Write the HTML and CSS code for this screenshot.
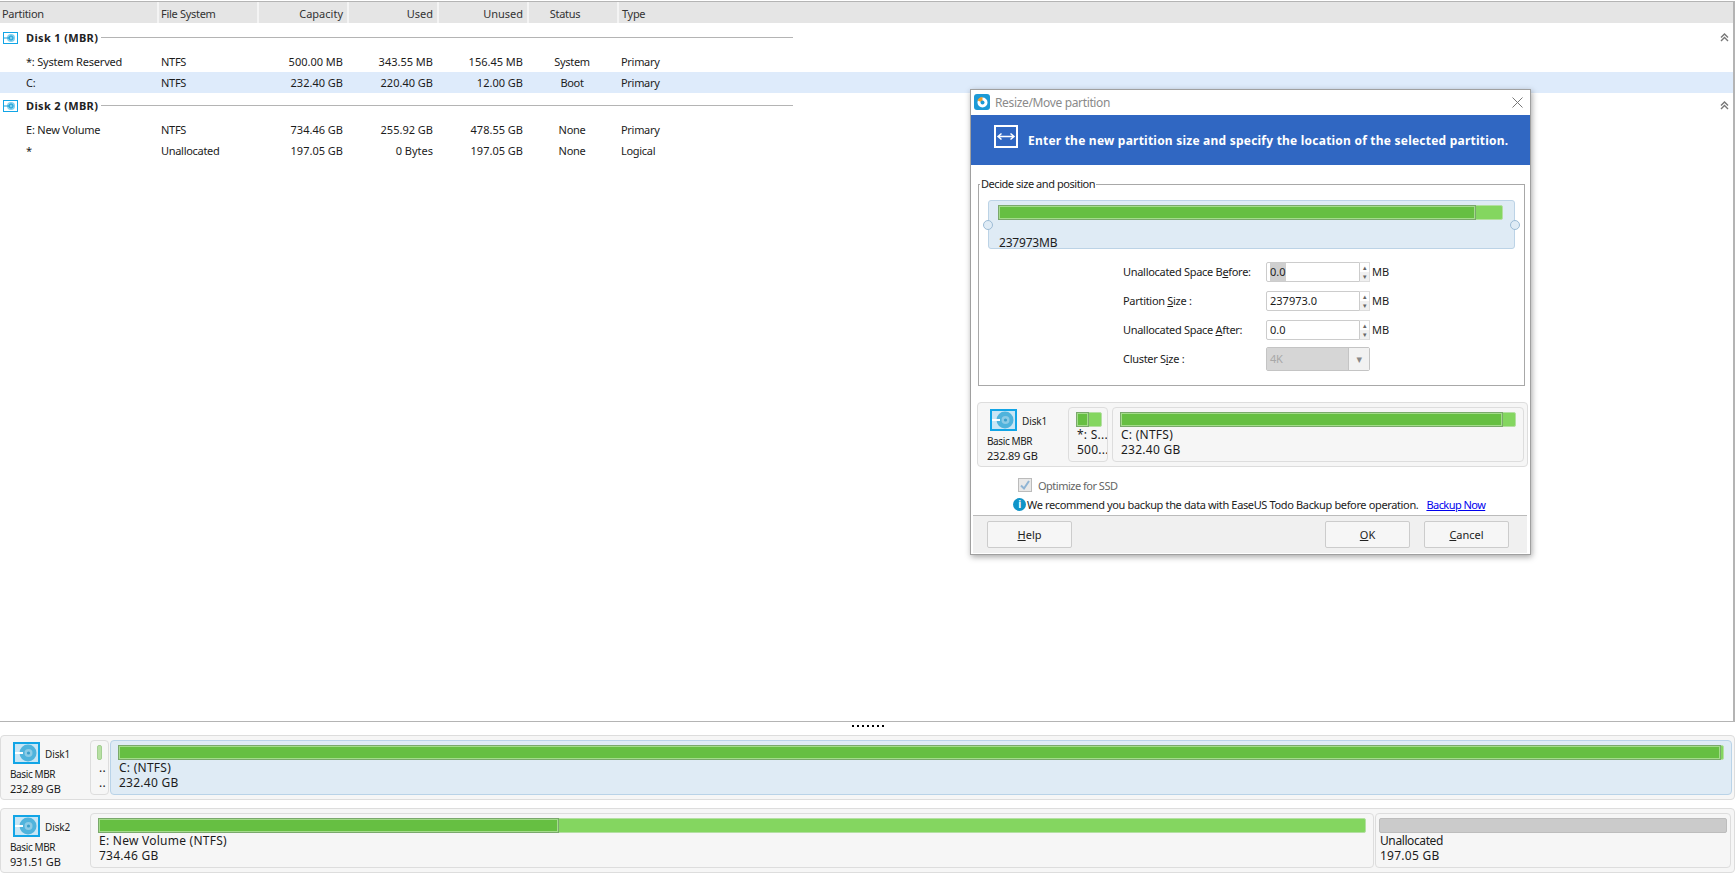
FILE: index.html
```html
<!DOCTYPE html>
<html lang="en">
<head>
<meta charset="utf-8">
<title>Resize/Move partition</title>
<link rel="stylesheet" href="styles.css">
</head>
<body>
<svg class="defs" width="0" height="0" aria-hidden="true">
  <symbol id="disk-big" viewBox="0 0 27 22">
    <rect x="1" y="1" width="25" height="20" fill="#c9e6f5" stroke="#12a5e6" stroke-width="2"/>
    <circle cx="15" cy="11" r="8.5" fill="#4fb3dc"/>
    <circle cx="15.500" cy="11" r="4" fill="#8ccbe6"/>
    <circle cx="15.500" cy="11" r="1.600" fill="#3a9fcb"/>
    <rect x="2" y="10" width="8" height="2" fill="#fff"/>
  </symbol>
  <symbol id="disk-small" viewBox="0 0 15 12">
    <rect x=".5" y=".5" width="14" height="11" fill="#fff" stroke="#12a5e6"/>
    <circle cx="8" cy="6" r="4" fill="#7fd0ee"/>
    <circle cx="8" cy="6" r="2" fill="none" stroke="#1a9ed6"/>
    <rect x="1" y="5.500" width="6" height="1" fill="#1a9ed6"/>
  </symbol>
  <symbol id="chev" viewBox="0 0 9 9">
    <path d="M1 4.500 4.500 1 8 4.500M1 8 4.500 4.500 8 8" fill="none" stroke="#777" stroke-width="1.400"/>
  </symbol>
</svg>

<main class="app">
  <section class="list">
    <div class="row head">
      <div>Partition</div><div>File System</div><div class="num">Capacity</div><div class="num">Used</div><div class="num">Unused</div><div class="status-head">Status</div><div class="type">Type</div>
    </div>
    <div class="group first">
      <svg class="gicon"><use href="#disk-small"/></svg><b>Disk 1 (MBR)</b><span class="rule"></span>
      <svg class="chev"><use href="#chev"/></svg>
    </div>
    <div class="row">
      <div class="name">*: System Reserved</div><div>NTFS</div><div class="num">500.00 MB</div><div class="num">343.55 MB</div><div class="num">156.45 MB</div><div class="ctr">System</div><div class="type">Primary</div>
    </div>
    <div class="row sel">
      <div class="name">C:</div><div>NTFS</div><div class="num">232.40 GB</div><div class="num">220.40 GB</div><div class="num">12.00 GB</div><div class="ctr">Boot</div><div class="type">Primary</div>
    </div>
    <div class="group">
      <svg class="gicon"><use href="#disk-small"/></svg><b>Disk 2 (MBR)</b><span class="rule"></span>
      <svg class="chev"><use href="#chev"/></svg>
    </div>
    <div class="row">
      <div class="name">E: New Volume</div><div>NTFS</div><div class="num">734.46 GB</div><div class="num">255.92 GB</div><div class="num">478.55 GB</div><div class="ctr">None</div><div class="type">Primary</div>
    </div>
    <div class="row">
      <div class="name">*</div><div>Unallocated</div><div class="num">197.05 GB</div><div class="num">0 Bytes</div><div class="num">197.05 GB</div><div class="ctr">None</div><div class="type">Logical</div>
    </div>
  </section>

  <div class="splitter"><i></i><i></i><i></i><i></i><i></i><i></i><i></i></div>

  <section class="disk">
    <div class="info">
      <div class="info-top"><svg class="dicon"><use href="#disk-big"/></svg><span>Disk1</span></div>
      <div class="info-kind">Basic MBR</div><div class="info-size">232.89 GB</div>
    </div>
    <div class="part tiny">
      <div class="sliver"></div>
      <div class="ptext">..</div><div class="ptext">..</div>
    </div>
    <div class="part active grow">
      <div class="bar"><div class="used" style="width:99.95%"></div></div>
      <div class="ptext">C: (NTFS)</div><div class="ptext">232.40 GB</div>
    </div>
  </section>

  <section class="disk">
    <div class="info">
      <div class="info-top"><svg class="dicon"><use href="#disk-big"/></svg><span>Disk2</span></div>
      <div class="info-kind">Basic MBR</div><div class="info-size">931.51 GB</div>
    </div>
    <div class="part e-part">
      <div class="bar"><div class="used" style="width:36.4%"></div></div>
      <div class="ptext">E: New Volume (NTFS)</div><div class="ptext">734.46 GB</div>
    </div>
    <div class="part grow un-part">
      <div class="bar gray"></div>
      <div class="ptext un-name">Unallocated</div><div class="ptext">197.05 GB</div>
    </div>
  </section>
</main>

<section class="dialog">
  <div class="titlebar">
    <svg class="logo" viewBox="0 0 16 16"><rect width="16" height="16" rx="3" fill="#1c9ad6"/><circle cx="8.500" cy="8.500" r="5" fill="#fff"/><path d="M8.500 8.500V3a5.500 5.500 0 0 0-5 3.500z" fill="#f0a030"/><circle cx="8.500" cy="8.500" r="2" fill="#1c9ad6"/></svg>
    <span class="ttl">Resize/Move partition</span>
    <svg class="close" viewBox="0 0 11 11"><path d="M.5.500 10.500 10.500M10.500.500.500 10.500" stroke="#777" fill="none"/></svg>
  </div>
  <div class="banner">
    <svg class="bicon" viewBox="0 0 24 23"><rect x="1" y="1" width="22" height="21" fill="none" stroke="#fff" stroke-width="2"/><path d="M4 11.500H20M7.500 8.500 4 11.500 7.500 14.500M16.500 8.500 20 11.500 16.500 14.500" fill="none" stroke="#fff" stroke-width="1.500"/></svg>
    <b>Enter the new partition size and specify the location of the selected partition.</b>
  </div>
  <div class="body">
    <fieldset class="decide">
      <legend>Decide size and position</legend>
      <div class="track">
        <span class="handle left"></span><span class="handle right"></span>
        <div class="bar"><div class="used" style="width:95.1%"></div></div>
        <div class="track-label">237973MB</div>
      </div>
      <div class="form">
        <label>Unallocated Space B<u>e</u>fore:</label>
        <div class="spin"><span class="val"><em>0.0</em></span><span class="arrows"><i>▴</i><i>▾</i></span></div><span>MB</span>
        <label>Partition <u>S</u>ize :</label>
        <div class="spin"><span class="val">237973.0</span><span class="arrows"><i>▴</i><i>▾</i></span></div><span>MB</span>
        <label>Unallocated Space <u>A</u>fter:</label>
        <div class="spin"><span class="val">0.0</span><span class="arrows"><i>▴</i><i>▾</i></span></div><span>MB</span>
        <label>Cluster S<u>i</u>ze :</label>
        <div class="combo"><span class="combo-val">4K</span><span class="combo-btn">▾</span></div><span></span>
      </div>
    </fieldset>

    <div class="disk in-dialog">
      <div class="info">
        <div class="info-top"><svg class="dicon"><use href="#disk-big"/></svg><span>Disk1</span></div>
        <div class="info-kind">Basic MBR</div><div class="info-size">232.89 GB</div>
      </div>
      <div class="part sys">
        <div class="bar"><div class="used" style="width:54%"></div></div>
        <div class="ptext">*: S...</div><div class="ptext">500...</div>
      </div>
      <div class="part grow">
        <div class="bar"><div class="used" style="width:97.2%"></div></div>
        <div class="ptext">C: (NTFS)</div><div class="ptext">232.40 GB</div>
      </div>
    </div>

    <div class="ssd"><span class="check"><svg viewBox="0 0 12 12"><path d="M2 6.500 5 9.500 10 2" fill="none" stroke="#8fb4d4" stroke-width="2"/></svg></span>Optimize for SSD</div>
    <div class="note"><span class="i">i</span><span class="note-text">We recommend you backup the data with EaseUS Todo Backup before operation.</span><a href="#">Backup Now</a></div>
  </div>
  <div class="footer">
    <button class="btn"><u>H</u>elp</button>
    <span class="spacer"></span>
    <button class="btn"><u>O</u>K</button>
    <button class="btn"><u>C</u>ancel</button>
  </div>
</section>
</body>
</html>
```

FILE: styles.css
```css
* { box-sizing: border-box; }
html, body { margin: 0; height: 100%; }
body {
  font-family: "Noto Sans", "DejaVu Sans", sans-serif;
  font-size: 11px;
  letter-spacing: -.3px;
  color: #1c1c1c;
  background: #fff;
  overflow: hidden;
}
.defs { position: absolute; }
.app { display: flex; flex-direction: column; height: 882px; }

/* partition list */
.list {
  height: 721px;
  margin-top: 1px;
  border-top: 1px solid #b4b4b4;
  border-right: 2px solid #b4b4b4;
  border-bottom: 1px solid #b4b4b4;
  flex: none;
}
.row {
  display: grid;
  grid-template-columns: 157px 100px 90px 90px 90px 90px 1fr;
  height: 21px;
  align-items: center;
  line-height: 21px;
}
.row > div { padding-left: 4px; white-space: nowrap; }
.row > .name { padding-left: 26px; letter-spacing: -.2px; }
.row > .num { padding-left: 0; padding-right: 4px; text-align: right; letter-spacing: 0; }
.row > .ctr { padding-left: 0; text-align: center; }
.row > .type { padding-left: 4px; }
.head { background: #e5e5e5; color: #333; margin-bottom: 4px; }
.head > div { height: 21px; padding-top: 1px; line-height: 21px; border-left: 2px solid #f4f4f4; }
.head > div:first-child { padding-left: 2px; border-left: 0; }
.head > div:nth-child(2) { padding-left: 2px; }
.head > .status-head { padding-left: 0; padding-right: 16px; text-align: center; }
.head > .type { padding-left: 3px; }
.sel { background: #deebfb; }
.group {
  display: flex;
  align-items: center;
  height: 21px;
  margin: 2px 0 3px;
  position: relative;
}
.group.first { margin-top: 0; }
.gicon { width: 15px; height: 12px; margin-left: 3px; flex: none; }
.group b { margin-left: 8px; color: #222; white-space: nowrap; letter-spacing: .35px; }
.rule { width: 692px; height: 1px; background: #b4b4b4; margin-left: 3px; }
.chev { position: absolute; right: 4px; top: 6px; width: 9px; height: 9px; }

/* splitter */
.splitter {
  height: 13px;
  flex: none;
  display: flex;
  justify-content: center;
  gap: 3px;
  padding-top: 3px;
}
.splitter i { width: 2px; height: 2px; background: #000; }

/* disk map */
.disk {
  flex: none;
  display: flex;
  height: 65px;
  margin-bottom: 8px;
  padding: 4px 2px 4px 0;
  background: #f6f6f6;
  border: 1px solid #ddd;
  border-radius: 4px;
}
.info { width: 89px; flex: none; padding-left: 9px; line-height: 15px; white-space: nowrap; }
.info-top { display: flex; align-items: center; height: 24px; padding-top: 2px; margin-left: 3px; margin-bottom: 3px; font-size: 10px; }
.info-top span { margin-left: 5px; padding-top: 2px; line-height: 14px; letter-spacing: -.1px; }
.info-kind { font-size: 10px; line-height: 14px; letter-spacing: -.4px; }
.dicon { width: 27px; height: 22px; flex: none; }
.info-size { font-size: 11px; letter-spacing: -.2px; }
.part {
  border: 1px solid #ddd;
  border-radius: 4px;
  padding: 4px 7px 0;
  overflow: hidden;
  font-size: 12px;
  letter-spacing: .25px;
  margin-right: 1px;
}
.grow { flex: 1; min-width: 0; }
.tiny { width: 19px; flex: none; }
.active { background: #dfebf5; border-color: #b9d3e8; margin-right: 0; }
.e-part { width: 1284px; flex: none; }
.un-part { padding-left: 3px; padding-right: 3px; }
.un-name { letter-spacing: -.4px; padding-left: 0; }
.sys { width: 40px; flex: none; margin-right: 4px; padding: 4px 5px 0 7px; }
.ptext { line-height: 15px; padding-left: 1px; white-space: nowrap; }
.bar {
  height: 15px;
  background: #84d660;
  border: 1px solid #b4dfa2;
  border-radius: 2px;
}
.bar.gray { background: #cbcbcb; border-color: #bdbdbd; }
.used {
  height: 15px;
  margin: -1px 0 0 -1px;
  background: #66bf42;
  border: 1px solid #7aa86c;
  box-shadow: inset 0 0 0 1px #a4dc8b;
}
.sliver { width: 5px; height: 15px; background: #b7e0a3; border: 1px solid #a3cf92; border-radius: 2px; margin-left: -1px; }

/* dialog */
.dialog {
  position: absolute;
  left: 970px;
  top: 89px;
  width: 561px;
  height: 466px;
  background: #fff;
  border: 1px solid #a0a0a0;
  box-shadow: 1px 2px 6px rgba(0,0,0,.35);
  display: flex;
  flex-direction: column;
}
.titlebar { height: 25px; flex: none; display: flex; align-items: center; padding: 0 7px 1px 3px; }
.logo { width: 16px; height: 16px; flex: none; }
.ttl { margin-left: 5px; color: #8a8a8a; font-size: 12px; letter-spacing: -.35px; }
.close { width: 11px; height: 11px; margin-left: auto; }
.banner {
  height: 50px;
  flex: none;
  background: #3067c2;
  color: #fff;
  display: flex;
  padding: 10px 0 0 23px;
}
.bicon { width: 24px; height: 23px; flex: none; }
.banner b { margin: 7px 0 0 10px; font-size: 12px; letter-spacing: .22px; white-space: nowrap; line-height: 17px; }
.body { flex: 1; padding: 0 7px; min-height: 0; }
.decide {
  margin: 12px 0 0;
  padding: 9px 9px 0;
  height: 209px;
  width: 544px;
  border: 1px solid #a8a8a8;
}
.decide legend { padding: 0 1px; margin-left: -8px; line-height: 14px; font-size: 11px; letter-spacing: -.45px; }
.track {
  position: relative;
  height: 49px;
  background: #dfebf5;
  border: 1px solid #bcd3e6;
  border-radius: 3px;
  padding: 4px 11px 0 9px;
}
.track .bar { width: 505px; }
.track-label { font-size: 12px; margin-top: 15px; padding-left: 1px; line-height: 15px; letter-spacing: -.2px; }
.handle {
  position: absolute;
  top: 19px;
  width: 10px;
  height: 10px;
  border-radius: 50%;
  background: #dfebf5;
  border: 1px solid #9dbcd6;
}
.handle.left { left: -6px; }
.handle.right { right: -6px; }
.form {
  display: grid;
  grid-template-columns: 143px 104px auto;
  grid-auto-rows: 29px;
  align-items: center;
  column-gap: 0;
  margin: 8px 0 0 135px;
}
.form label { white-space: nowrap; }
.form > span { margin-left: 2px; letter-spacing: 0; }
.spin { display: flex; height: 20px; }
.val {
  flex: 1;
  border: 1px solid #ccc;
  border-radius: 2px 0 0 2px;
  padding-left: 3px;
  line-height: 18px;
  letter-spacing: 0;
}
.val em { font-style: normal; background: #cfcfcf; display: inline-block; width: 16px; }
.arrows { width: 10px; display: flex; flex-direction: column; border: 1px solid #ddd; border-left: 0; }
.arrows i { flex: 1; font-style: normal; font-size: 7px; line-height: 9px; text-align: center; color: #666; }
.arrows i + i { background: #f0f0f0; }
.combo { display: flex; height: 24px; border: 1px solid #c4c4c4; border-radius: 2px; }
.combo-val { flex: 1; background: #d6d6d6; color: #a8a8a8; padding-left: 3px; line-height: 22px; }
.combo-btn { width: 21px; background: #f2f2f2; border-left: 1px solid #c4c4c4; text-align: center; color: #888; line-height: 21px; }
.in-dialog { width: 551px; margin: 16px 0 0 -1px; }
.in-dialog .info { width: 90px; }
.ssd { display: flex; align-items: center; height: 14px; margin: 11px 0 0 40px; color: #666; letter-spacing: -.5px; }
.check { width: 14px; height: 14px; background: #e8e8e8; border: 1px solid #bbb; margin-right: 6px; display: flex; }
.note { display: flex; align-items: center; height: 14px; margin: 5px 0 0 35px; color: #222; white-space: nowrap; letter-spacing: -.36px; }
.i {
  width: 13px; height: 13px; flex: none;
  border-radius: 50%;
  background: #0f94c8;
  color: #fff;
  font-weight: bold;
  text-align: center;
  line-height: 13px;
  font-size: 10px;
}
.note-text { margin-left: 1px; }
.note a { margin-left: 8px; color: #0000ee; letter-spacing: -.55px; }
.footer {
  flex: none;
  height: 38px;
  margin: 0 3px 1px 2px;
  background: #f0f0f0;
  border-top: 1px solid #bbb;
  display: flex;
  align-items: center;
  padding: 0 18px 0 14px;
  gap: 14px;
}
.spacer { flex: 1; }
.btn {
  width: 85px;
  height: 27px;
  background: #f6f6f6;
  border: 1px solid #ccc;
  border-radius: 2px;
  font: inherit;
  color: #222;
  padding: 0;
}
```
